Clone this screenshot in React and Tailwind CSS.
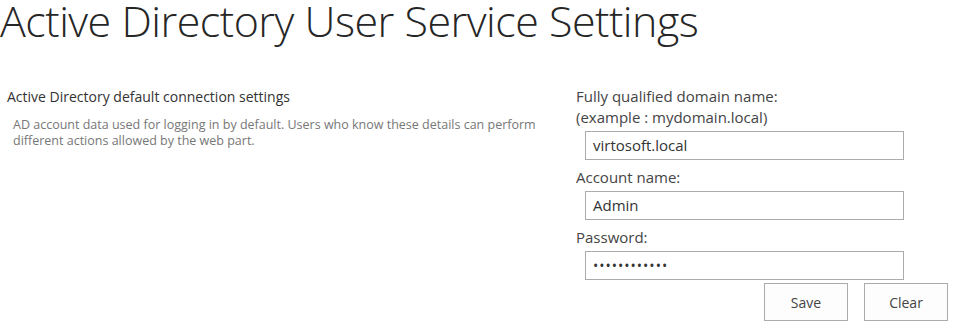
export default function App() {
  const font = { fontFamily: '"Open Sans", "Segoe UI", sans-serif' };
  return (
    <div className="w-[957px] h-[331px] bg-white overflow-hidden text-[#444]" style={font}>
      <h1 className="text-[43px] font-light leading-[40px] pt-[1px] text-[#262626] tracking-[-0.5px] whitespace-nowrap">
        Active Directory User Service Settings
      </h1>
      <div className="flex mt-[45px]">
        <div className="w-[576px] pl-[7px]">
          <div className="mt-[1px] text-[14px] leading-[20px] text-[#333]">Active Directory default connection settings</div>
          <div className="pl-[6px] mt-[10px] text-[12.5px] leading-[16px] text-[#777] w-[545px]">
            AD account data used for logging in by default. Users who know these details can perform different actions allowed by the web part.
          </div>
        </div>
        <div className="w-[372px] flex flex-col">
          <div className="text-[15px] leading-[21px] text-[#444]">
            Fully qualified domain name:
            <br />
            (example : mydomain.local)
          </div>
          <div className="ml-[9px] mt-[3px] w-[319px] h-[29px] border border-[#ababab] px-[7px] flex items-center text-[15px] text-[#333]">
            virtosoft.local
          </div>
          <div className="mt-[7px] text-[15px] leading-[21px]">Account name:</div>
          <div className="ml-[9px] mt-[3px] w-[319px] h-[29px] border border-[#ababab] px-[7px] flex items-center text-[15px] text-[#333]">
            Admin
          </div>
          <div className="mt-[7px] text-[15px] leading-[21px]">Password:</div>
          <div className="ml-[9px] mt-[3px] w-[319px] h-[29px] border border-[#ababab] px-[7px] flex items-center text-[14px] text-[#333] tracking-[1px]">
            ••••••••••••
          </div>
          <div className="flex justify-end gap-[16px] mt-[3px]">
            <button className="w-[84px] h-[38px] border border-[#ababab] bg-[#fdfdfd] text-[14px] text-[#444]">Save</button>
            <button className="w-[84px] h-[38px] border border-[#ababab] bg-[#fdfdfd] text-[14px] text-[#444]">Clear</button>
          </div>
        </div>
      </div>
    </div>
  );
}
